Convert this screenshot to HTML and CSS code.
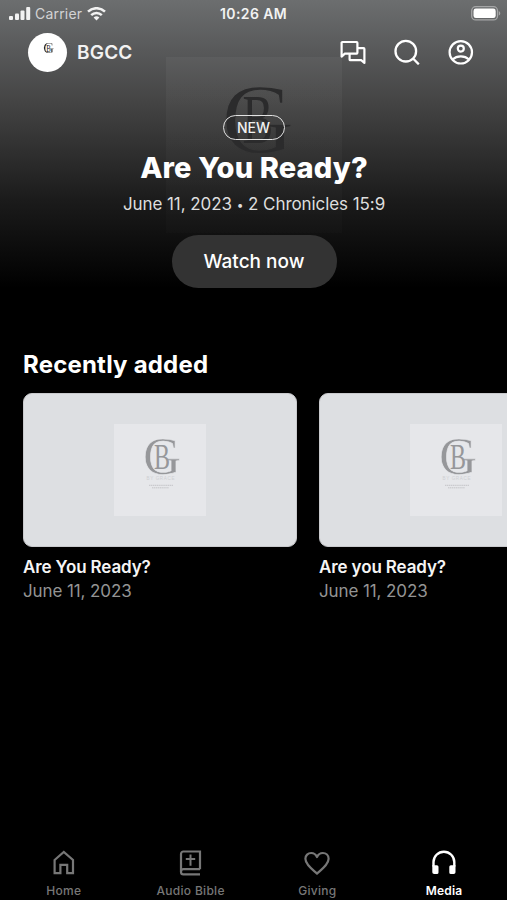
FILE: index.html
```html
<!DOCTYPE html>
<html lang="en">
<head>
    <meta charset="UTF-8">
    <meta name="viewport" content="width=device-width, initial-scale=1.0">
    <title>BGCC - Media</title>
    <link rel="stylesheet" href="styles.css">
</head>
<body>
    <!-- Shared logo artwork -->
    <svg class="sprite" width="0" height="0" aria-hidden="true">
        <mask id="thin-ring" maskUnits="userSpaceOnUse" x="0" y="0" width="92" height="92">
            <rect width="92" height="92" fill="#fff"/>
            <text class="mark-letter mark-trim" x="29" y="49.5" font-size="52.5" textLength="38" lengthAdjust="spacingAndGlyphs">G</text>
        </mask>
        <symbol id="bg-mark" viewBox="0 0 92 92">
            <g mask="url(#thin-ring)">
                <text class="mark-letter" x="29" y="49.5" font-size="52.5" textLength="38" lengthAdjust="spacingAndGlyphs">G</text>
            </g>
            <text class="mark-letter" x="40" y="45" font-size="36" textLength="16" lengthAdjust="spacingAndGlyphs">B</text>
        </symbol>
    </svg>

    <div class="app">
        <section class="hero">
            <div class="hero-art">
                <svg viewBox="0 0 92 92"><use href="#bg-mark"/></svg>
            </div>

            <div class="status-bar">
                <div class="status-left">
                    <svg width="22" height="14" viewBox="0 0 22 14" fill="currentColor">
                        <rect x="0" y="9" width="4" height="4" rx="1"/>
                        <rect x="6" y="6.5" width="4" height="6.5" rx="1"/>
                        <rect x="11.5" y="3.5" width="4" height="9.5" rx="1"/>
                        <rect x="17.2" y="0" width="4" height="13" rx="1"/>
                    </svg>
                    <span class="carrier">Carrier</span>
                    <svg class="wifi" width="19" height="14" viewBox="0 0 19 14" fill="none" stroke="currentColor" stroke-width="2.5">
                        <path d="M1 4.6a12.3 12.3 0 0 1 17 0"/>
                        <path d="M4.2 8.2a7.6 7.6 0 0 1 10.6 0"/>
                        <path d="M9.5 13.6L6.6 10.6a4.1 4.1 0 0 1 5.8 0z" fill="currentColor" stroke="none"/>
                    </svg>
                </div>
                <div class="status-time">10:26 AM</div>
                <svg class="battery" width="30" height="15" viewBox="0 0 30 15">
                    <rect x="0.7" y="0.7" width="25.8" height="13.2" rx="4" fill="none" stroke="#a5a6a7" stroke-width="1.3"/>
                    <rect x="2.5" y="2.5" width="22.2" height="9.6" rx="2.4" fill="#fff"/>
                    <path d="M27.8 5v4.6c2-.9 2-3.7 0-4.6z" fill="#a5a6a7"/>
                </svg>
            </div>

            <header class="header">
                <div class="avatar">
                    <svg viewBox="0 0 92 92"><use href="#bg-mark"/></svg>
                </div>
                <div class="church-name">BGCC</div>
                <div class="header-actions">
                    <svg width="26" height="26" viewBox="0 0 26 26" fill="none" stroke="currentColor" stroke-width="2.2" stroke-linejoin="round">
                        <path d="M1.6 17.6V3.8a.8.8 0 0 1 .8-.8h14.2a.8.8 0 0 1 .8.8v10a.8.8 0 0 1-.8.8H4.8z"/>
                        <path d="M17.4 9.2h6.2a.8.8 0 0 1 .8.8v14l-3.2-2.8H10.4a.8.8 0 0 1-.8-.8v-5.8"/>
                    </svg>
                    <svg width="26" height="26" viewBox="0 0 26 26" fill="none" stroke="currentColor" stroke-width="2.3">
                        <circle cx="11.8" cy="12.2" r="10.3"/>
                        <path d="M18.8 19.3l6 6"/>
                    </svg>
                    <svg width="26" height="26" viewBox="0 0 26 26" fill="none" stroke="currentColor" stroke-width="2.2">
                        <circle cx="12.8" cy="13.3" r="11.2"/>
                        <circle cx="12.8" cy="9.6" r="3"/>
                        <path d="M4.6 20.5c4.4-4.2 12-4.2 16.4 0"/>
                    </svg>
                </div>
            </header>

            <div class="hero-content">
                <span class="badge">NEW</span>
                <h1 class="hero-title">Are You Ready?</h1>
                <p class="hero-meta">June 11, 2023 <span class="dot">•</span> 2 Chronicles 15:9</p>
                <button class="watch-button">Watch now</button>
            </div>
        </section>

        <section class="recent">
            <h2 class="section-title">Recently added</h2>
            <div class="card-row">
                <article class="card">
                    <div class="thumb">
                        <div class="thumb-art">
                            <svg viewBox="0 0 92 92">
                                <use href="#bg-mark"/>
                                <text class="mark-caption" x="32.5" y="56" font-size="4.6" textLength="28">BY GRACE</text>
                                <path d="M35 61.3h24M38 63.8h17" stroke="#c3c4c7" stroke-width="1" stroke-dasharray="1.4 .5"/>
                            </svg>
                        </div>
                    </div>
                    <h3 class="card-title">Are You Ready?</h3>
                    <p class="card-date">June 11, 2023</p>
                </article>
                <article class="card">
                    <div class="thumb">
                        <div class="thumb-art">
                            <svg viewBox="0 0 92 92">
                                <use href="#bg-mark"/>
                                <text class="mark-caption" x="32.5" y="56" font-size="4.6" textLength="28">BY GRACE</text>
                                <path d="M35 61.3h24M38 63.8h17" stroke="#c3c4c7" stroke-width="1" stroke-dasharray="1.4 .5"/>
                            </svg>
                        </div>
                    </div>
                    <h3 class="card-title">Are you Ready?</h3>
                    <p class="card-date">June 11, 2023</p>
                </article>
            </div>
        </section>

        <nav class="tab-bar">
            <a class="tab">
                <svg width="28" height="28" viewBox="0 0 28 28" fill="none" stroke="currentColor" stroke-width="2.2">
                    <path d="M5.6 11L14.8 3l9.2 8v13.2h-5.8v-8.4h-6.8v8.4H5.6z"/>
                </svg>
                <span>Home</span>
            </a>
            <a class="tab">
                <svg width="28" height="28" viewBox="0 0 28 28" fill="none" stroke="currentColor" stroke-width="2.2">
                    <path d="M24 20.2V2.5H7.4A2.4 2.4 0 0 0 5 4.9v18a2.4 2.4 0 0 0 2.4 2.4H24"/>
                    <path d="M5 22.4a2.4 2.4 0 0 1 2.4-2.2H24"/>
                    <path d="M14.5 5.600v11.200M9.800 10h9.400" stroke-width="2"/>
                </svg>
                <span>Audio Bible</span>
            </a>
            <a class="tab">
                <svg width="28" height="28" viewBox="0 0 28 28" fill="none" stroke="currentColor" stroke-width="2.2" stroke-linejoin="round">
                    <path d="M14 24.7C9 20.1 2.4 15.4 2.4 9.8c0-3.4 2.6-5.8 5.8-5.8 2.4 0 4.6 1.4 5.8 4 1.2-2.6 3.4-4 5.8-4 3.2 0 5.8 2.4 5.8 5.8 0 5.6-6.6 10.3-11.6 14.900z"/>
                </svg>
                <span>Giving</span>
            </a>
            <a class="tab active">
                <svg width="28" height="28" viewBox="0 0 28 28" fill="currentColor">
                    <path d="M3.5 17.500v-4.400a10.400 10.400 0 0 1 20.800 0v4.400" fill="none" stroke="currentColor" stroke-width="2.400"/>
                    <path d="M2.300 16.200h4.600a1.600 1.600 0 0 1 1.600 1.600v5.600A1.600 1.600 0 0 1 6.900 25H4.100a1.800 1.800 0 0 1-1.800-1.800z"/>
                    <path d="M25.500 16.200h-4.600a1.600 1.600 0 0 0-1.600 1.600v5.600a1.600 1.600 0 0 0 1.600 1.600h2.800a1.800 1.800 0 0 0 1.800-1.800z"/>
                </svg>
                <span>Media</span>
            </a>
        </nav>
    </div>
</body>
</html>
```
FILE: styles.css
```css
* {
    box-sizing: border-box;
    margin: 0;
    padding: 0;
}

body {
    background-color: #000;
    color: #fff;
    font-family: Inter, "Liberation Sans", sans-serif;
    overflow: hidden;
}

svg {
    display: block;
    flex-shrink: 0;
}

.sprite {
    position: absolute;
}

.app {
    height: 900px;
    display: flex;
    flex-direction: column;
    overflow: hidden;
}

.mark-letter {
    font-family: "Liberation Serif", serif;
    fill: currentColor;
}

.mark-trim {
    fill: none;
    stroke: #000;
    stroke-width: 0.7px;
}

.mark-caption {
    font-family: "Liberation Sans", sans-serif;
    fill: #cfd0d3;
}

/* Hero */
.hero {
    position: relative;
    height: 290px;
    background: linear-gradient(#6c6e6f 0, #58595a 50px, #454545 100px, #303030 150px, #1b1b1b 200px, #0d0d0d 245px, #000 288px);
}

.hero-art {
    position: absolute;
    top: 57px;
    left: 166px;
    width: 176px;
    height: 176px;
    color: #2b2b2c;
    background: linear-gradient(rgba(255, 255, 255, 0.045), rgba(255, 255, 255, 0.01));
}

.status-bar {
    position: relative;
    display: grid;
    grid-template-columns: 1fr auto 1fr;
    align-items: center;
    height: 28px;
    padding: 0 6px 1px 9px;
    font-size: 14px;
}

.status-left {
    display: flex;
    align-items: center;
    color: #f2f2f2;
}

.carrier {
    margin-left: 4px;
    color: #d3d3d4;
    letter-spacing: 0.2px;
}

.wifi {
    margin-left: 5px;
}

.status-time {
    margin-right: 3px;
    font-weight: 600;
    letter-spacing: 0.4px;
    color: #f2f2f2;
}

.battery {
    justify-self: end;
}

.header {
    position: relative;
    display: flex;
    align-items: center;
    height: 48px;
    padding: 0 33px 0 28px;
}

.avatar {
    width: 39px;
    height: 39px;
    border-radius: 50%;
    background-color: #fff;
    color: #222;
    padding: 6.5px;
}

.church-name {
    margin-left: 10px;
    font-size: 19px;
    font-weight: 600;
    letter-spacing: 0.2px;
    color: #f2f2f2;
}

.header-actions {
    display: flex;
    gap: 28px;
    margin-left: auto;
}

.hero-content {
    position: relative;
    display: flex;
    flex-direction: column;
    align-items: center;
    padding-top: 39px;
}

.badge {
    width: 62px;
    height: 25px;
    border: 1.5px solid #e2e2e2;
    border-radius: 13px;
    font-size: 14px;
    font-weight: 500;
    line-height: 23px;
    text-align: center;
    color: #f0f0f0;
}

.hero-title {
    margin-top: 10px;
    padding-left: 1px;
    font-size: 29px;
    font-weight: 800;
    line-height: 36px;
    letter-spacing: 0.15px;
}

.hero-meta {
    margin-top: 6px;
    padding-left: 1px;
    font-size: 17px;
    line-height: 24px;
    letter-spacing: -0.07px;
    color: #dedede;
}

.dot {
    font-size: 12px;
    vertical-align: 1px;
}

.watch-button {
    width: 165px;
    height: 53px;
    margin: 18px 0 0 1px;
    border: none;
    border-radius: 27px;
    background-color: #333;
    color: #fff;
    font-family: inherit;
    font-size: 19px;
    font-weight: 500;
}

/* Recently added */
.recent {
    flex: 1;
    padding: 59px 0 0 23px;
}

.section-title {
    font-size: 24px;
    font-weight: 700;
    line-height: 32px;
    letter-spacing: 0.2px;
}

.card-row {
    display: flex;
    gap: 22px;
    margin-top: 12px;
}

.card {
    flex: 0 0 274px;
}

.thumb {
    display: flex;
    align-items: center;
    justify-content: center;
    height: 154px;
    border: 1px solid #c8c9cc;
    border-radius: 9px;
    background-color: #dddfe2;
}

.thumb-art {
    width: 92px;
    height: 92px;
    background-color: #e6e7ea;
    color: #96979a;
}

.card-title {
    margin-top: 8px;
    font-size: 17px;
    font-weight: 600;
    line-height: 24px;
    letter-spacing: -0.12px;
    color: #f5f5f5;
}

.card-date {
    font-size: 17px;
    line-height: 25px;
    letter-spacing: -0.1px;
    color: #949494;
}

/* Bottom tabs */
.tab-bar {
    display: grid;
    grid-template-columns: repeat(4, 1fr);
    height: 52px;
}

.tab {
    display: flex;
    flex-direction: column;
    align-items: center;
    color: #777;
    font-size: 12px;
    font-weight: 500;
    line-height: 16px;
    letter-spacing: 0.3px;
}

.tab svg {
    margin-top: 1px;
}

.tab span {
    margin-top: 6px;
    padding-left: 1px;
}

.tab.active {
    color: #fff;
    font-weight: 600;
    letter-spacing: 0.2px;
}
```
